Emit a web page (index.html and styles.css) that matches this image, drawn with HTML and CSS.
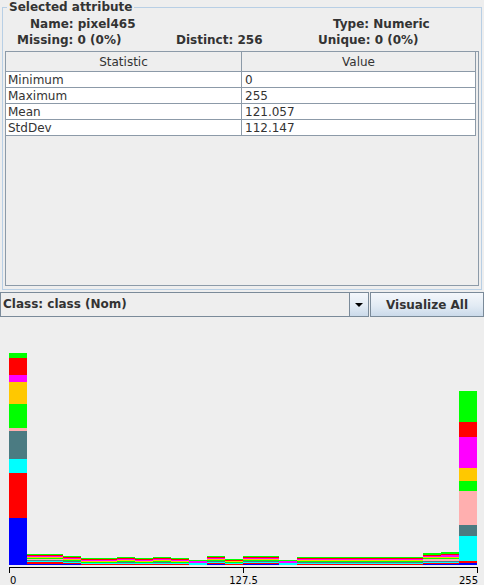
FILE: index.html
```html
<!DOCTYPE html>
<html>
<head>
<meta charset="utf-8">
<link rel="stylesheet" href="styles.css">
</head>
<body>
<fieldset class="attr">
  <legend class="attr-title">Selected attribute</legend>
  <div class="info-row row1">
    <span class="c-name">Name: pixel465</span>
    <span>Type: Numeric</span>
  </div>
  <div class="info-row row2">
    <span class="c-missing">Missing: 0 (0%)</span>
    <span class="c-distinct">Distinct: 256</span>
    <span>Unique: 0 (0%)</span>
  </div>
  <div class="scroll">
    <div class="stats">
      <div class="hcell c1">Statistic</div><div class="hcell c2">Value</div>
      <div class="cell c1">Minimum</div><div class="cell c2">0</div>
      <div class="cell c1">Maximum</div><div class="cell c2">255</div>
      <div class="cell c1">Mean</div><div class="cell c2">121.057</div>
      <div class="cell c1">StdDev</div><div class="cell c2">112.147</div>
    </div>
  </div>
</fieldset>
<div class="class-row">
  <div class="combo">
    <span class="combo-text">Class: class (Nom)</span>
    <span class="combo-arrow"><svg width="8" height="4" viewBox="0 0 8 4"><path d="M0 0H8L4 4Z" fill="#000"/></svg></span>
  </div>
  <button class="viz-btn">Visualize All</button>
</div>
<svg class="hist" width="484" height="268" viewBox="0 317 484 268" shape-rendering="crispEdges">
  <defs>
    <g id="s13">
      <rect y="-1" width="18" height="1" fill="#0000ff"/><rect y="-2" width="18" height="1" fill="#ff0000"/><rect y="-3" width="18" height="1" fill="#00ffff"/><rect y="-4" width="18" height="1" fill="#4b7b82"/><rect y="-6" width="18" height="2" fill="#ffafaf"/><rect y="-7" width="18" height="1" fill="#00ff00"/><rect y="-8" width="18" height="1" fill="#ffc800"/><rect y="-10" width="18" height="2" fill="#ff00ff"/><rect y="-11" width="18" height="1" fill="#ff0000"/><rect y="-13" width="18" height="2" fill="#00ff00"/>
    </g>
    <g id="s12">
      <rect y="-1" width="18" height="1" fill="#0000ff"/><rect y="-2" width="18" height="1" fill="#ff0000"/><rect y="-3" width="18" height="1" fill="#00ffff"/><rect y="-4" width="18" height="1" fill="#4b7b82"/><rect y="-6" width="18" height="2" fill="#ffafaf"/><rect y="-7" width="18" height="1" fill="#00ff00"/><rect y="-8" width="18" height="1" fill="#ffc800"/><rect y="-9" width="18" height="1" fill="#ff00ff"/><rect y="-10" width="18" height="1" fill="#ff0000"/><rect y="-12" width="18" height="2" fill="#00ff00"/>
    </g>
    <g id="s11">
      <rect y="-1" width="18" height="1" fill="#0000ff"/><rect y="-3" width="18" height="2" fill="#ff0000"/><rect y="-4" width="18" height="1" fill="#00ffff"/><rect y="-5" width="18" height="1" fill="#4b7b82"/><rect y="-6" width="18" height="1" fill="#ffafaf"/><rect y="-7" width="18" height="1" fill="#00ff00"/><rect y="-8" width="18" height="1" fill="#ffc800"/><rect y="-9" width="18" height="1" fill="#ff00ff"/><rect y="-10" width="18" height="1" fill="#ff0000"/><rect y="-11" width="18" height="1" fill="#00ff00"/>
    </g>
    <g id="s9">
      <rect y="-1" width="18" height="1" fill="#0000ff"/><rect y="-2" width="18" height="1" fill="#ff0000"/><rect y="-3" width="18" height="1" fill="#00ffff"/><rect y="-4" width="18" height="1" fill="#4b7b82"/><rect y="-5" width="18" height="1" fill="#00ff00"/><rect y="-6" width="18" height="1" fill="#ffc800"/><rect y="-7" width="18" height="1" fill="#ff00ff"/><rect y="-8" width="18" height="1" fill="#ff0000"/><rect y="-9" width="18" height="1" fill="#00ff00"/>
    </g>
    <g id="s8">
      <rect y="-1" width="18" height="1" fill="#ff0000"/><rect y="-2" width="18" height="1" fill="#00ffff"/><rect y="-3" width="18" height="1" fill="#4b7b82"/><rect y="-4" width="18" height="1" fill="#00ff00"/><rect y="-5" width="18" height="1" fill="#ffc800"/><rect y="-6" width="18" height="1" fill="#ff00ff"/><rect y="-7" width="18" height="1" fill="#ff0000"/><rect y="-8" width="18" height="1" fill="#00ff00"/>
    </g>
    <g id="s7">
      <rect y="-1" width="18" height="1" fill="#ff0000"/><rect y="-2" width="18" height="1" fill="#00ffff"/><rect y="-3" width="18" height="1" fill="#00ff00"/><rect y="-4" width="18" height="1" fill="#ffc800"/><rect y="-5" width="18" height="1" fill="#ff00ff"/><rect y="-6" width="18" height="1" fill="#ff0000"/><rect y="-7" width="18" height="1" fill="#00ff00"/>
    </g>
    <g id="s6">
      <rect y="-1" width="18" height="1" fill="#ff0000"/><rect y="-2" width="18" height="1" fill="#00ffff"/><rect y="-3" width="18" height="1" fill="#00ff00"/><rect y="-4" width="18" height="1" fill="#ffc800"/><rect y="-5" width="18" height="1" fill="#ff0000"/><rect y="-6" width="18" height="1" fill="#00ff00"/>
    </g>
    <g id="s5">
      <rect y="-2" width="18" height="2" fill="#00ffff"/><rect y="-4" width="18" height="2" fill="#ff00ff"/><rect y="-5" width="18" height="1" fill="#00ff00"/>
    </g>
  </defs>

  <!-- bin 0 -->
  <rect x="9" y="353" width="18" height="5" fill="#00ff00"/>
  <rect x="9" y="358" width="18" height="17" fill="#ff0000"/>
  <rect x="9" y="375" width="18" height="7" fill="#ff00ff"/>
  <rect x="9" y="382" width="18" height="22" fill="#ffc800"/>
  <rect x="9" y="404" width="18" height="24" fill="#00ff00"/>
  <rect x="9" y="428" width="18" height="3" fill="#ffafaf"/>
  <rect x="9" y="431" width="18" height="28" fill="#4b7b82"/>
  <rect x="9" y="459" width="18" height="14" fill="#00ffff"/>
  <rect x="9" y="473" width="18" height="45" fill="#ff0000"/>
  <rect x="9" y="518" width="18" height="47" fill="#0000ff"/>

  <!-- small bins -->
  <use href="#s11" x="27" y="565"/>
  <use href="#s11" x="45" y="565"/>
  <use href="#s9" x="63" y="565"/>
  <use href="#s7" x="81" y="565"/>
  <use href="#s7" x="99" y="565"/>
  <use href="#s8" x="117" y="565"/>
  <use href="#s7" x="135" y="565"/>
  <use href="#s8" x="153" y="565"/>
  <use href="#s7" x="171" y="565"/>
  <use href="#s5" x="189" y="565"/>
  <use href="#s9" x="207" y="565"/>
  <use href="#s6" x="225" y="565"/>
  <use href="#s9" x="243" y="565"/>
  <use href="#s9" x="261" y="565"/>
  <use href="#s5" x="279" y="565"/>
  <use href="#s8" x="297" y="565"/>
  <use href="#s8" x="315" y="565"/>
  <use href="#s8" x="333" y="565"/>
  <use href="#s8" x="351" y="565"/>
  <use href="#s8" x="369" y="565"/>
  <use href="#s8" x="387" y="565"/>
  <use href="#s8" x="405" y="565"/>
  <use href="#s12" x="423" y="565"/>
  <use href="#s13" x="441" y="565"/>

  <!-- bin 25 -->
  <rect x="459" y="391" width="18" height="31" fill="#00ff00"/>
  <rect x="459" y="422" width="18" height="15" fill="#ff0000"/>
  <rect x="459" y="437" width="18" height="31" fill="#ff00ff"/>
  <rect x="459" y="468" width="18" height="13" fill="#ffc800"/>
  <rect x="459" y="481" width="18" height="10" fill="#00ff00"/>
  <rect x="459" y="491" width="18" height="34" fill="#ffafaf"/>
  <rect x="459" y="525" width="18" height="11" fill="#4b7b82"/>
  <rect x="459" y="536" width="18" height="25" fill="#00ffff"/>
  <rect x="459" y="561" width="18" height="2" fill="#ff0000"/>
  <rect x="459" y="563" width="18" height="2" fill="#0000ff"/>

  <!-- axis -->
  <rect x="9" y="567" width="469" height="1" fill="#000"/>
  <rect x="9" y="567" width="1" height="6" fill="#000"/>
  <rect x="243" y="567" width="1" height="6" fill="#000"/>
  <rect x="477" y="567" width="1" height="6" fill="#000"/>
  <text class="axis-label" x="10" y="584">0</text>
  <text class="axis-label" x="243.5" y="584" text-anchor="middle">127.5</text>
  <text class="axis-label" x="478" y="584" text-anchor="end">255</text>
</svg>
</body>
</html>
```

FILE: styles.css
```css
html, body {
  margin: 0;
  padding: 0;
}

body {
  width: 484px;
  height: 585px;
  overflow: hidden;
  background: #eeeeee;
  font-family: "DejaVu Sans", "Liberation Sans", sans-serif;
  font-size: 12px;
  color: #333333;
}

.attr {
  margin: 0 2px;
  padding: 0 0 3px 0;
  border: 1px solid #b8cfe5;
  min-width: 0;
}

.attr-title {
  margin-left: 4px;
  padding: 0 2px;
  font-weight: bold;
  line-height: 14px;
  height: 14px;
}

.info-row {
  display: flex;
  height: 16px;
  line-height: 16px;
  font-weight: bold;
  white-space: nowrap;
}

.row1 {
  margin-top: 2px;
  padding-left: 27px;
}

.row2 {
  padding-left: 14px;
}

.c-name {
  width: 303px;
}

.c-missing {
  width: 159px;
}

.c-distinct {
  width: 142px;
}

.scroll {
  margin: 3px 2px 0 2px;
  height: 235px;
  box-sizing: border-box;
  border: 1px solid #8c9aa8;
  background: #eeeeee;
}

.stats {
  display: grid;
  grid-template-columns: 236px 234px;
}

.hcell {
  height: 20px;
  padding-top: 1px;
  line-height: 18px;
  box-sizing: border-box;
  text-align: center;
  background: #eeeeee;
  border-bottom: 1px solid #8c9aa8;
  font-weight: normal;
}

.cell {
  height: 16px;
  padding-top: 1px;
  line-height: 14px;
  box-sizing: border-box;
  background: #ffffff;
  border-bottom: 1px solid #8c9aa8;
  white-space: nowrap;
}

.c1 {
  border-right: 1px solid #8c9aa8;
}

.c2 {
  border-right: 1px solid #8c9aa8;
}

.cell.c1 {
  padding-left: 2px;
}

.cell.c2 {
  padding-left: 3px;
}

.class-row {
  display: flex;
  margin-top: 2px;
  height: 25px;
}

.combo {
  display: flex;
  width: 369px;
  height: 25px;
  box-sizing: border-box;
  border: 1px solid #7a8a99;
  background: #eeeeee;
}

.combo-text {
  flex: 1;
  padding-left: 2px;
  line-height: 23px;
  font-weight: bold;
  white-space: nowrap;
}

.combo-arrow {
  width: 18px;
  border-left: 1px solid #7a8a99;
  display: flex;
  align-items: center;
  justify-content: center;
  background: linear-gradient(to bottom, #f4f7fb 0%, #e2ebf4 55%, #cbdaea 100%);
}

.combo-arrow svg {
  display: block;
}

.viz-btn {
  margin: 0 0 0 1px;
  padding: 0;
  width: 114px;
  height: 25px;
  box-sizing: border-box;
  border: 1px solid #7a8a99;
  border-radius: 0;
  background: linear-gradient(to bottom, #f4f7fb 0%, #e2ebf4 55%, #cbdaea 100%);
  font-family: "DejaVu Sans", "Liberation Sans", sans-serif;
  font-size: 12px;
  font-weight: bold;
  color: #333333;
  text-align: center;
}

.hist {
  display: block;
}

.axis-label {
  font-family: "DejaVu Sans", "Liberation Sans", sans-serif;
  font-size: 10px;
  fill: #000000;
}
```
